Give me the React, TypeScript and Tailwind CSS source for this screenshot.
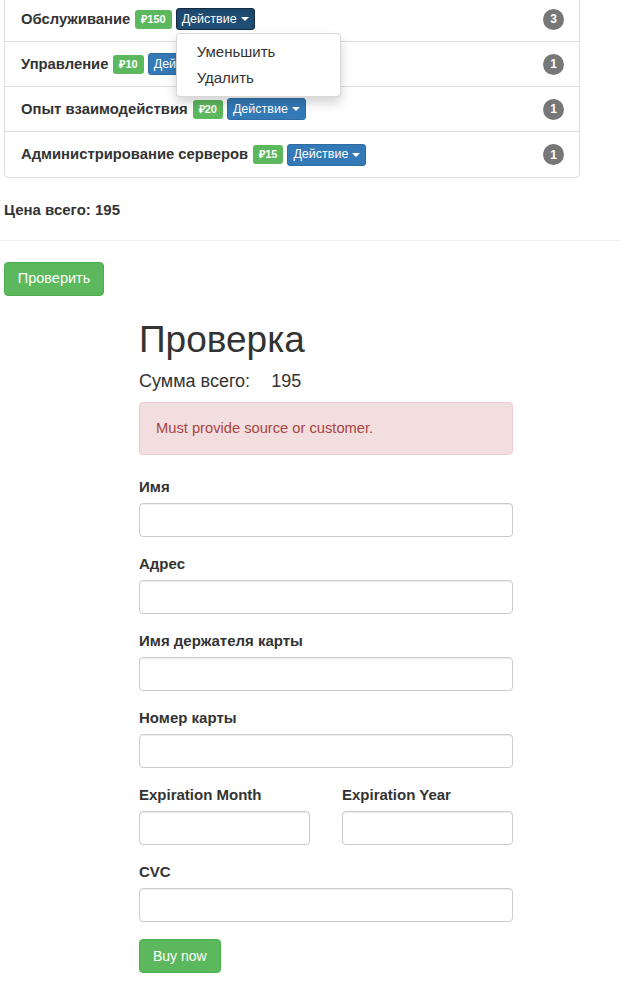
import React from "react";

type Item = { title: string; price: string; qty: number; open?: boolean };

const items: Item[] = [
  { title: "Обслуживание", price: "₽150", qty: 3, open: true },
  { title: "Управление", price: "₽10", qty: 1 },
  { title: "Опыт взаимодействия", price: "₽20", qty: 1 },
  { title: "Администрирование серверов", price: "₽15", qty: 1 },
];

function Caret() {
  return (
    <span className="ml-[4px] inline-block h-0 w-0 border-x-[4px] border-t-[4px] border-x-transparent border-t-white align-middle" />
  );
}

function Row({ item, last }: { item: Item; last: boolean }) {
  return (
    <div
      className={
        "relative flex h-[45px] items-center justify-between pl-[16px] pr-[15px] " +
        (last ? "" : "border-b border-[#ddd]")
      }
    >
      <div className="flex items-center">
        <span className="text-[14.8px] font-bold text-[#333]">{item.title}</span>
        <span className="ml-[5px] flex h-[19px] items-center rounded-[3px] bg-[#5cb85c] px-[6px] text-[11px] font-bold text-white">
          {item.price}
        </span>
        <div className="relative ml-[4px]">
          <button
            className={
              "flex h-[22px] items-center rounded-[3px] border px-[5px] text-[12.5px] text-white " +
              (item.open
                ? "border-[#122b40] bg-[#204d74] shadow-[inset_0_3px_5px_rgba(0,0,0,0.125)]"
                : "border-[#2e6da4] bg-[#337ab7]")
            }
          >
            Действие
            <Caret />
          </button>
          {item.open && (
            <div className="absolute left-0 top-[25px] z-10 w-[165px] rounded-[4px] border border-[rgba(0,0,0,0.15)] bg-white py-[5px] shadow-[0_6px_12px_rgba(0,0,0,0.175)]">
              <div className="px-[20px] text-[15px] leading-[26px] text-[#333]">Уменьшить</div>
              <div className="px-[20px] text-[15px] leading-[26px] text-[#333]">Удалить</div>
            </div>
          )}
        </div>
      </div>
      <span className="flex h-[21px] min-w-[21px] items-center justify-center rounded-full bg-[#777] px-[6px] text-[12px] font-bold text-white">
        {item.qty}
      </span>
    </div>
  );
}

function Field({ label, className = "" }: { label: string; className?: string }) {
  return (
    <div className={className}>
      <div className="text-[15px] font-bold leading-[20px] text-[#333]">{label}</div>
      <input className="mt-[6px] block h-[34px] w-full rounded-[4px] border border-[#ccc] bg-white px-[12px] text-[14px] shadow-[inset_0_1px_1px_rgba(0,0,0,0.075)] outline-none" />
    </div>
  );
}

export default function App() {
  return (
    <div className="min-h-[1001px] bg-white font-['Liberation_Sans',Arial,sans-serif] text-[14px] text-[#333]">
      <div className="-mt-[4px] ml-[4px] w-[576px] rounded-[4px] border border-[#ddd] bg-white">
        {items.map((it, i) => (
          <Row key={it.title} item={it} last={i === items.length - 1} />
        ))}
      </div>

      <div className="ml-[4px] mt-[22px] text-[15px] font-bold leading-[20px]">Цена всего: 195</div>

      <div className="mt-[20px] h-px w-[620px] bg-[#eee]" />

      <button className="ml-[4px] mt-[21px] h-[34px] w-[100px] rounded-[4px] border border-[#4cae4c] bg-[#5cb85c] text-[14.5px] text-white">
        Проверить
      </button>

      <div className="ml-[139px] mt-[24px] w-[374px]">
        <h1 className="text-[37px] leading-[40px] text-[#333]">Проверка</h1>
        <div className="mt-[11px] text-[18px] leading-[20px]">
          Сумма всего:<span className="ml-[21px]">195</span>
        </div>
        <div className="mt-[11px] rounded-[4px] border border-[#ebccd1] bg-[#f2dede] px-[16px] py-[15px] text-[14.7px] leading-[21px] text-[#a94442]">
          Must provide source or customer.
        </div>

        <div className="mt-[22px] flex flex-col gap-[17px]">
          <Field label="Имя" />
          <Field label="Адрес" />
          <Field label="Имя держателя карты" />
          <Field label="Номер карты" />
          <div className="flex gap-[32px]">
            <Field label="Expiration Month" className="flex-1" />
            <Field label="Expiration Year" className="flex-1" />
          </div>
          <Field label="CVC" />
          <div>
            <button className="h-[34px] rounded-[4px] border border-[#4cae4c] bg-[#5cb85c] px-[13px] text-[14px] text-white">
              Buy now
            </button>
          </div>
        </div>
      </div>
    </div>
  );
}
